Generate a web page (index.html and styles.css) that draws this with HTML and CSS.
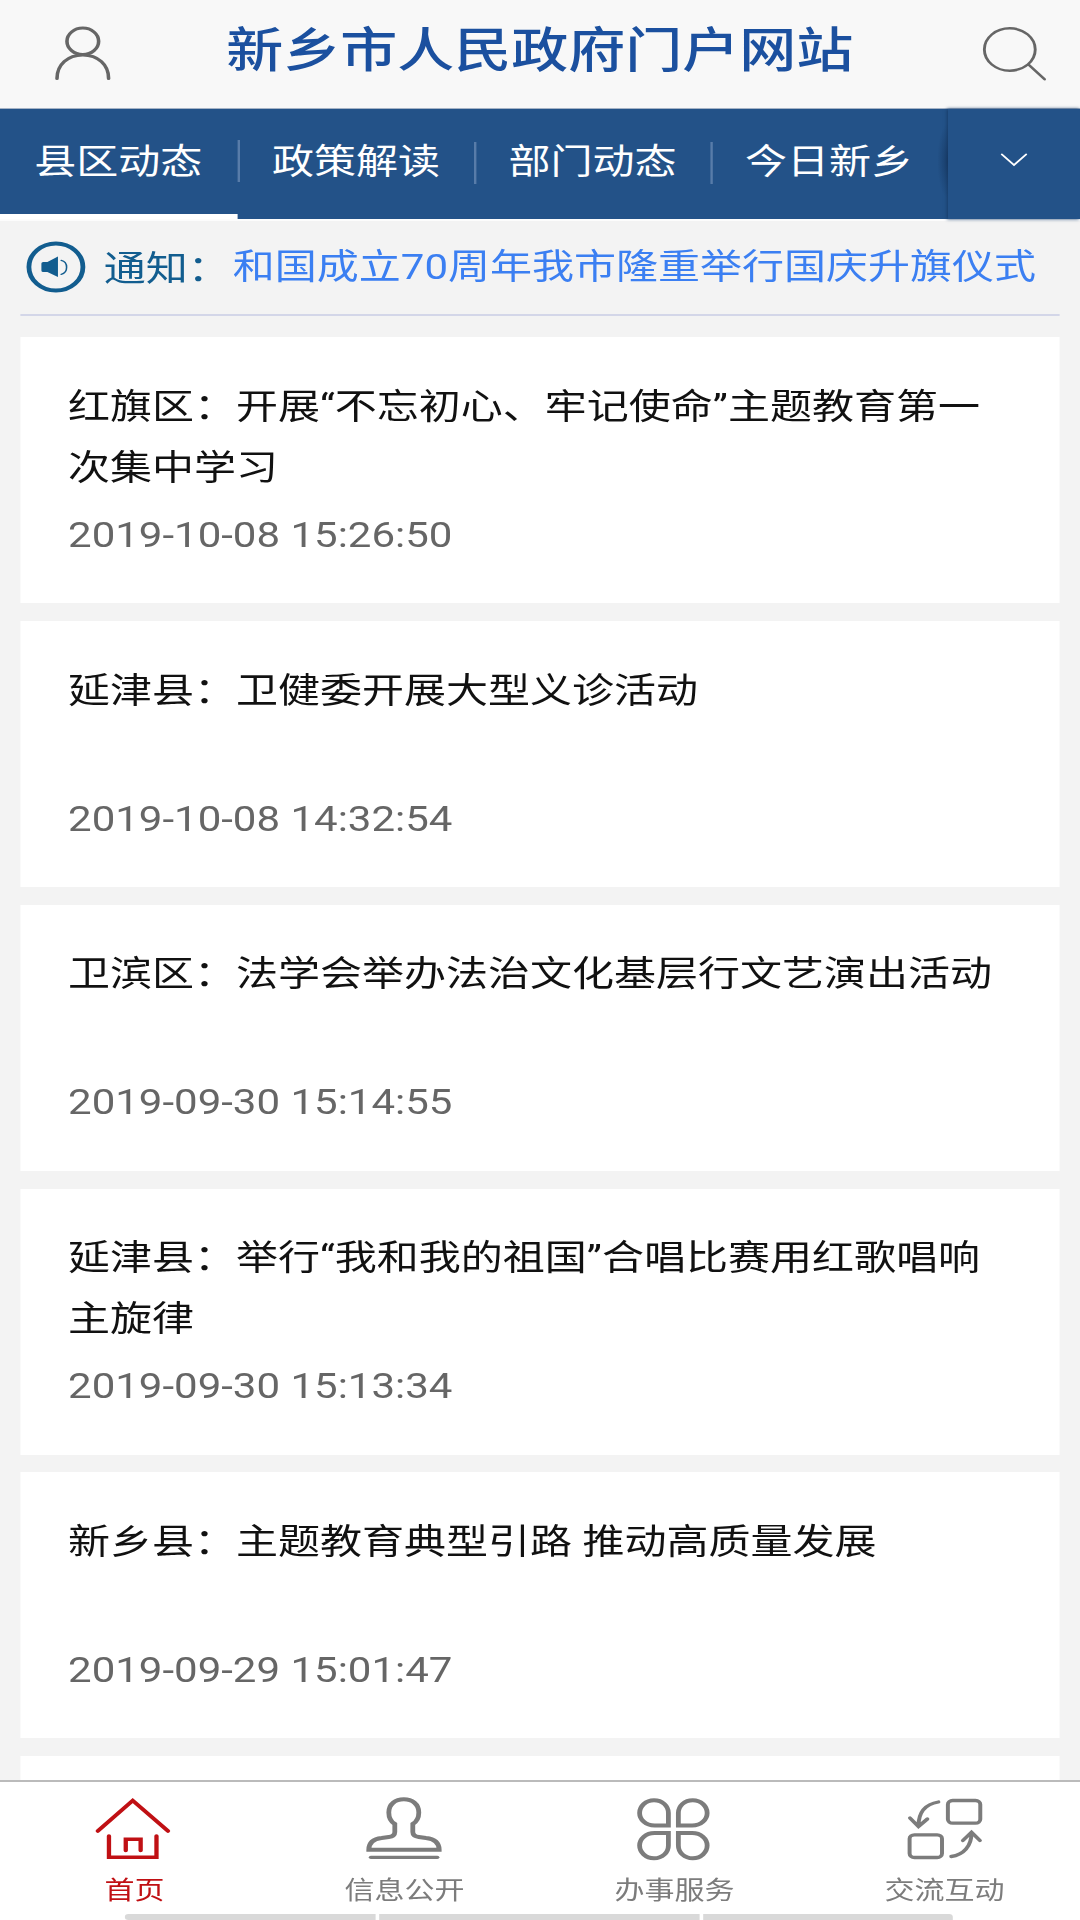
FILE: index.html
```html
<!DOCTYPE html>
<html lang="zh-CN">
<head>
<meta charset="UTF-8" />
<meta name="viewport" content="width=device-width, initial-scale=1" />
<title>新乡市人民政府门户网站</title>
<link rel="stylesheet" href="styles.css">
</head>
<body>
<div id="app">
  <!-- Header -->
  <header class="header">
    <svg class="icon-user" viewBox="0 0 46 53" aria-label="我的">
      <circle cx="23" cy="14.3" r="13.2" />
      <path d="M1.5 51.5C1.5 37.5 10.5 28 23 28s21.5 9.5 21.5 23.5" />
    </svg>
    <h1>新乡市人民政府门户网站</h1>
    <svg class="icon-search" viewBox="0 0 53 54" aria-label="搜索">
      <circle cx="22.5" cy="22.5" r="21.2" />
      <path d="M38.5 38L51.5 52.3" />
    </svg>
  </header>

  <!-- Channel tabs -->
  <nav class="channels">
    <a class="channel active">县区动态</a>
    <a class="channel">政策解读</a>
    <a class="channel">部门动态</a>
    <a class="channel">今日新乡</a>
    <button class="more" aria-label="更多">
      <svg viewBox="0 0 22 14"><path d="M1 1.5l10 10.5l10-10.5" /></svg>
    </button>
  </nav>

  <!-- Notice -->
  <div class="notice">
    <svg viewBox="0 0 49 52">
      <ellipse class="ring" cx="24.6" cy="26" rx="22.5" ry="23.6" />
      <path class="horn" d="M14 21h3.5l8.8-5.5v20.4L17.5 31H14q-1.5 0-1.5-1.5v-7Q12.5 21 14 21z" />
      <path class="wave" d="M29 19.3c6 1.5 6 12.500 0 14" />
    </svg>
    <span class="notice-label">通知：</span>
    <span class="notice-text">和国成立70周年我市隆重举行国庆升旗仪式</span>
  </div>

  <!-- News list -->
  <main class="news">
    <article class="card">
      <h2>红旗区：开展“不忘初心、牢记使命”主题教育第一次集中学习</h2>
      <time>2019-10-08 15:26:50</time>
    </article>
    <article class="card">
      <h2>延津县：卫健委开展大型义诊活动</h2>
      <time>2019-10-08 14:32:54</time>
    </article>
    <article class="card">
      <h2>卫滨区：法学会举办法治文化基层行文艺演出活动</h2>
      <time>2019-09-30 15:14:55</time>
    </article>
    <article class="card">
      <h2>延津县：举行“我和我的祖国”合唱比赛用红歌唱响主旋律</h2>
      <time>2019-09-30 15:13:34</time>
    </article>
    <article class="card">
      <h2>新乡县：主题教育典型引路 推动高质量发展</h2>
      <time>2019-09-29 15:01:47</time>
    </article>
    <article class="card"></article>
  </main>

  <!-- Bottom tab bar -->
  <footer class="tabbar">
    <a class="tab active">
      <svg viewBox="0 0 64 66">
        <path d="M1.5 35L30.6 4.5L60 35M10.8 40v21.3h39.6V40M24.8 54.5V43.3h12.4v11.2" />
      </svg>
      <span>首页</span>
    </a>
    <a class="tab">
      <svg viewBox="0 0 64 66">
        <path class="thick" d="M24 28C20.5 25.5 19 21 19 16.5C19 8 24.5 3.3 31.5 3.3S44 8 44 16.5C44 21 42.5 25.5 39 28v8c0 3 2 4.5 5 5l6 1c7 1 11 5 11 11.8H2.3C2.3 47 6 43 13 42l6-1c3.5-.5 5-2 5-5z" />
        <path d="M4 61.3h55.5" />
      </svg>
      <span>信息公开</span>
    </a>
    <a class="tab">
      <svg viewBox="0 0 64 66">
        <g class="thick">
          <path id="petal" d="M27 29.5H15.5C8 29.5 3 23.5 3 17S8 4.200 15 4.200S27 10 27 17z" />
          <use href="#petal" transform="translate(62.3 0) scale(-1 1)" />
          <use href="#petal" transform="translate(0 66.5) scale(1 -1)" />
          <use href="#petal" transform="translate(62.3 66.5) scale(-1 -1)" />
        </g>
      </svg>
      <span>办事服务</span>
    </a>
    <a class="tab">
      <svg viewBox="0 0 64 66">
        <rect x="34.9" y="4.5" width="27" height="22.7" rx="4" />
        <rect x="3" y="38.8" width="27" height="22.7" rx="4" />
        <path d="M27 6C17 8 10.4 15 10.4 30M3.3 22l7.1 8.5L17.8 23" />
        <path d="M37.7 60.5C48 59 54.6 50 54.6 37M47.4 44.500l7.2-8.3l7 8.3" />
      </svg>
      <span>交流互动</span>
    </a>
    <div class="sheet-edge"><i></i><i></i><i></i></div>
  </footer>
</div>
</body>
</html>
```
FILE: styles.css
```css
* {
  box-sizing: border-box;
}

html, body {
  margin: 0;
  padding: 0;
  width: 1080px;
  height: 1920px;
  overflow: hidden;
  background: #f3f3f3;
}

/* 900 wide layout widened to the 1080 screen */
#app {
  width: 900px;
  height: 1920px;
  display: flex;
  flex-direction: column;
  overflow: hidden;
  transform: scaleX(1.2);
  transform-origin: 0 0;
  font-family: Roboto, "Noto Sans CJK SC", sans-serif;
  font-size: 35px;
  color: #111;
}

svg {
  display: block;
  fill: none;
  stroke: #666;
  stroke-width: 3;
  stroke-linecap: round;
  overflow: visible;
}

/* Header */
.header {
  flex: none;
  height: 109px;
  padding: 0 28.5px 0 46px;
  display: flex;
  align-items: center;
  justify-content: space-between;
  background: #f8f8f8;
  border-bottom: 1px solid #a5b3c6;
}

.header h1 {
  margin: 0 11px 6px 0;
  font-size: 47.5px;
  font-weight: 500;
  line-height: 60px;
  color: #1b509f;
}

.icon-user {
  width: 46px;
  height: 53px;
  margin-bottom: 1px;
}

.icon-search {
  width: 53px;
  height: 54px;
  stroke-width: 2.4;
}

/* Channel tabs */
.channels {
  flex: none;
  height: 112px;
  display: flex;
  background: #235288;
  border-bottom: 2px solid #fcfcfc;
}

.channel {
  position: relative;
  flex: 1;
  padding-bottom: 12px;
  display: flex;
  align-items: center;
  justify-content: center;
  color: #fff;
}

.channel.active {
  padding: 0 1px 7px 0;
  border-bottom: 5px solid #fff;
}

.channel:nth-child(-n+3)::after {
  content: "";
  position: absolute;
  right: -2px;
  top: 33px;
  width: 2.5px;
  height: 42px;
  background: #587ca9;
}

.channel.active::after {
  top: 31px;
}

.more {
  position: relative;
  width: 110.5px;
  border: none;
  padding: 0 0 8px;
  display: flex;
  align-items: center;
  justify-content: center;
  background: #235288;
  box-shadow: -1px 0 3px #183c68;
}

.more::before {
  content: "";
  position: absolute;
  left: -9px;
  top: 14px;
  width: 9px;
  height: 76px;
  background: radial-gradient(ellipse at right, #12305799, transparent 70%);
}

.more svg {
  width: 22px;
  height: 14px;
  stroke: #fff;
  stroke-width: 1.8;
}

/* Notice */
.notice {
  flex: none;
  height: 95px;
  margin: 0 17px;
  padding: 0 5px 1px;
  display: flex;
  align-items: center;
  border-bottom: 2px solid #d3d6e8;
  white-space: nowrap;
}

.notice svg {
  width: 49px;
  height: 52px;
}

.ring {
  stroke: #125d8f;
  stroke-width: 4;
}

.horn {
  fill: #125d8f;
  stroke: none;
}

.wave {
  stroke: #125d8f;
  stroke-width: 1.3;
}

.notice-label {
  margin: -3px 0 0 15.5px;
  color: #125d8f;
}

.notice-text {
  margin: -7px 0 0 2.5px;
  color: #3b7ff2;
}

/* News list */
.news {
  flex: 1;
  min-height: 0;
  overflow: hidden;
  padding: 21.3px 17.2px 0;
  display: flex;
  flex-direction: column;
  gap: 17.75px;
}

.card {
  flex: none;
  height: 266px;
  padding: 39.5px 40px 0 39.5px;
  background: #fff;
}

.card h2 {
  margin: 0;
  height: 128px;
  font-size: 35px;
  font-weight: 400;
  line-height: 61px;
}

.card time {
  display: block;
  line-height: 62px;
  color: #666;
}

/* Bottom tab bar */
.tabbar {
  position: relative;
  flex: none;
  height: 140px;
  display: flex;
  background: #fff;
  border-top: 2px solid #bbb;
}

.tab {
  flex: 1;
  padding: 14px 1px 0 0;
  display: flex;
  flex-direction: column;
  align-items: center;
  font-size: 25px;
  line-height: 36px;
  color: #7c7c7c;
}

.tab svg {
  width: 64px;
  height: 66px;
  margin-bottom: 11px;
  stroke: #7c7c7c;
  stroke-width: 3.3;
}

.tab .thick {
  stroke-width: 4;
}

.tab.active {
  color: #c01014;
}

.tab.active svg {
  stroke: #c01014;
  stroke-width: 3.6;
}

/* top edge of the sheet peeking in from below */
.sheet-edge {
  position: absolute;
  left: 104px;
  bottom: 0;
  width: 690px;
  height: 6px;
  display: grid;
  grid-template-columns: 209px 266.5px 208.5px;
  gap: 3px;
}

.sheet-edge i {
  background: #d9d9d9;
}

.sheet-edge i:first-child {
  border-radius: 4px 0 0 4px;
}

.sheet-edge i:last-child {
  border-radius: 0 3px 0 0;
}
```
